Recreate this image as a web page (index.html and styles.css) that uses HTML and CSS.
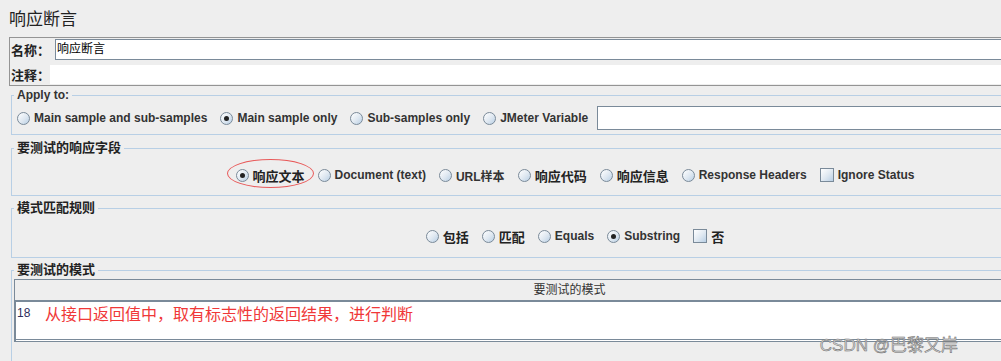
FILE: index.html
```html
<!DOCTYPE html>
<html lang="zh-CN">
<head>
    <meta charset="UTF-8">
    <title>响应断言</title>
    <link rel="stylesheet" href="styles.css">
</head>
<body>
<div class="wrap">
    <div class="title">响应断言</div>

    <div class="name-panel">
        <div class="name-row">
            <span class="name-label">名称：</span>
            <div class="name-field">响应断言</div>
        </div>
        <div class="note-row">
            <span class="note-label">注释：</span>
            <div class="note-field"></div>
        </div>
    </div>

    <fieldset class="group g-apply">
        <legend>Apply to:</legend>
        <div class="choices left">
            <label class="choice"><span class="radio"></span>Main sample and sub-samples</label>
            <label class="choice"><span class="radio on"></span>Main sample only</label>
            <label class="choice"><span class="radio"></span>Sub-samples only</label>
            <label class="choice"><span class="radio"></span>JMeter Variable</label>
            <div class="var-field"></div>
        </div>
    </fieldset>

    <fieldset class="group g-field">
        <legend class="cjk">要测试的响应字段</legend>
        <div class="choices center">
            <label class="choice marked cjk"><span class="radio on"></span>响应文本</label>
            <label class="choice"><span class="radio"></span>Document (text)</label>
            <label class="choice"><span class="radio"></span>URL样本</label>
            <label class="choice cjk"><span class="radio"></span>响应代码</label>
            <label class="choice cjk"><span class="radio"></span>响应信息</label>
            <label class="choice"><span class="radio"></span>Response Headers</label>
            <label class="choice"><span class="check"></span>Ignore Status</label>
        </div>
    </fieldset>

    <fieldset class="group g-rule">
        <legend class="cjk">模式匹配规则</legend>
        <div class="choices center">
            <label class="choice cjk"><span class="radio"></span>包括</label>
            <label class="choice cjk"><span class="radio"></span>匹配</label>
            <label class="choice"><span class="radio"></span>Equals</label>
            <label class="choice"><span class="radio on"></span>Substring</label>
            <label class="choice cjk"><span class="check"></span>否</label>
        </div>
    </fieldset>

    <fieldset class="group g-pattern">
        <legend class="cjk">要测试的模式</legend>
        <div class="table">
            <div class="table-head">要测试的模式</div>
            <div class="table-body">
                <div class="table-row">
                    <span class="line-no">18</span>
                    <span class="line-text">从接口返回值中，取有标志性的返回结果，进行判断</span>
                </div>
            </div>
        </div>
    </fieldset>
</div>

<div class="watermark">CSDN @巴黎又岸</div>
</body>
</html>
```

FILE: styles.css
```css
*{margin: 0;padding: 0;box-sizing: border-box;}
html,body{overflow: hidden;}
body{background: #eeeeee;color: #333333;font-family: "Liberation Sans","Noto Sans CJK SC",sans-serif;font-size: 12px;position: relative;height: 361px;}
.wrap{width: 1136px;}

.title{height: 37px;padding: 3px 0 0 9px;font-size: 17px;line-height: 34px;color: #222222;}

.name-panel{margin-left: 9px;height: 49px;border: 1px solid #949494;border-right: none;padding-top: 1px;}
.name-row{display: flex;align-items: center;height: 21px;}
.name-label{width: 45px;padding-left: 1px;font-size: 13px;font-weight: bold;color: #222222;}
.name-field{flex: 1;height: 21px;background: #ffffff;border: 1px solid #7a8a99;border-right: none;padding-left: 1px;line-height: 19px;color: #000000;}
.note-row{display: flex;align-items: center;height: 19px;margin-top: 5px;}
.note-label{width: 40px;padding-left: 1px;font-size: 13px;font-weight: bold;color: #222222;}
.note-field{flex: 1;height: 19px;background: #ffffff;}

.group{margin-left: 11px;border: 1px solid #b8cfe5;border-right: none;padding: 0 0 0 2px;min-width: 0;}
.group legend{padding: 0 3px;font-weight: bold;line-height: 14px;color: #333333;}
.group legend.cjk{font-size: 13px;color: #222222;}

.g-apply{margin-top: 2px;padding-top: 4px;padding-bottom: 4px;}
.g-field{margin-top: 6px;padding-top: 5px;padding-bottom: 5px;}
.g-rule{margin-top: 5px;padding-top: 9px;padding-bottom: 9px;}
.g-pattern{margin-top: 5px;padding-top: 2px;padding-bottom: 40px;}

.choices{display: flex;align-items: center;gap: 14px;height: 24px;}
.choices.left{padding-left: 3px;gap: 13px;}
.choices.center{justify-content: center;height: 30px;gap: 13px;}
.g-rule .choices.center{height: 24px;}

.choice{display: flex;align-items: center;gap: 4px;font-weight: bold;white-space: nowrap;color: #333333;}
.choice.cjk{font-size: 13px;color: #222222;}
.choice.marked{position: relative;}
.choice.marked::before{content: "";position: absolute;left: -9px;top: -7px;width: 85px;height: 27px;border: 1px solid #e85a5a;border-radius: 50%;}

.radio{width: 13px;height: 13px;border-radius: 50%;border: 1px solid #7a8a99;background: linear-gradient(135deg,#ffffff 0%,#dfe8f1 55%,#b8cfe5 100%);display: flex;align-items: center;justify-content: center;flex: none;}
.radio.on::after{content: "";width: 5px;height: 5px;border-radius: 50%;background: #222222;}
.check{width: 14px;height: 14px;border: 1px solid #7a8a99;background: linear-gradient(135deg,#ffffff 0%,#dfe8f1 55%,#b8cfe5 100%);flex: none;}

.var-field{flex: 1;height: 24px;margin-left: -4px;background: #ffffff;border: 1px solid #7a8a99;border-right: none;}

.table{border-top: 1px solid #7a8a99;border-left: 1px solid #7a8a99;}
.table-head{height: 22px;line-height: 21px;text-align: center;padding-right: 12px;border-bottom: 2px solid #7a8a99;color: #333333;}
.table-body{height: 40px;background: #ffffff;border-left: 1px solid #7a8a99;border-bottom: 3px double #7a8a99;}
.table-row{display: flex;align-items: center;height: 20px;padding-top: 1px;}
.line-no{width: 29px;padding-left: 1px;color: #2e2e5c;font-size: 12px;}
.line-text{font-size: 16px;color: #f03838;}

.watermark{position: absolute;right: 43px;top: 331px;font-size: 17px;color: #d4d4d4;-webkit-text-stroke: 0.5px #6a6a6a;font-family: "Liberation Sans","Noto Sans CJK SC",sans-serif;}
```
